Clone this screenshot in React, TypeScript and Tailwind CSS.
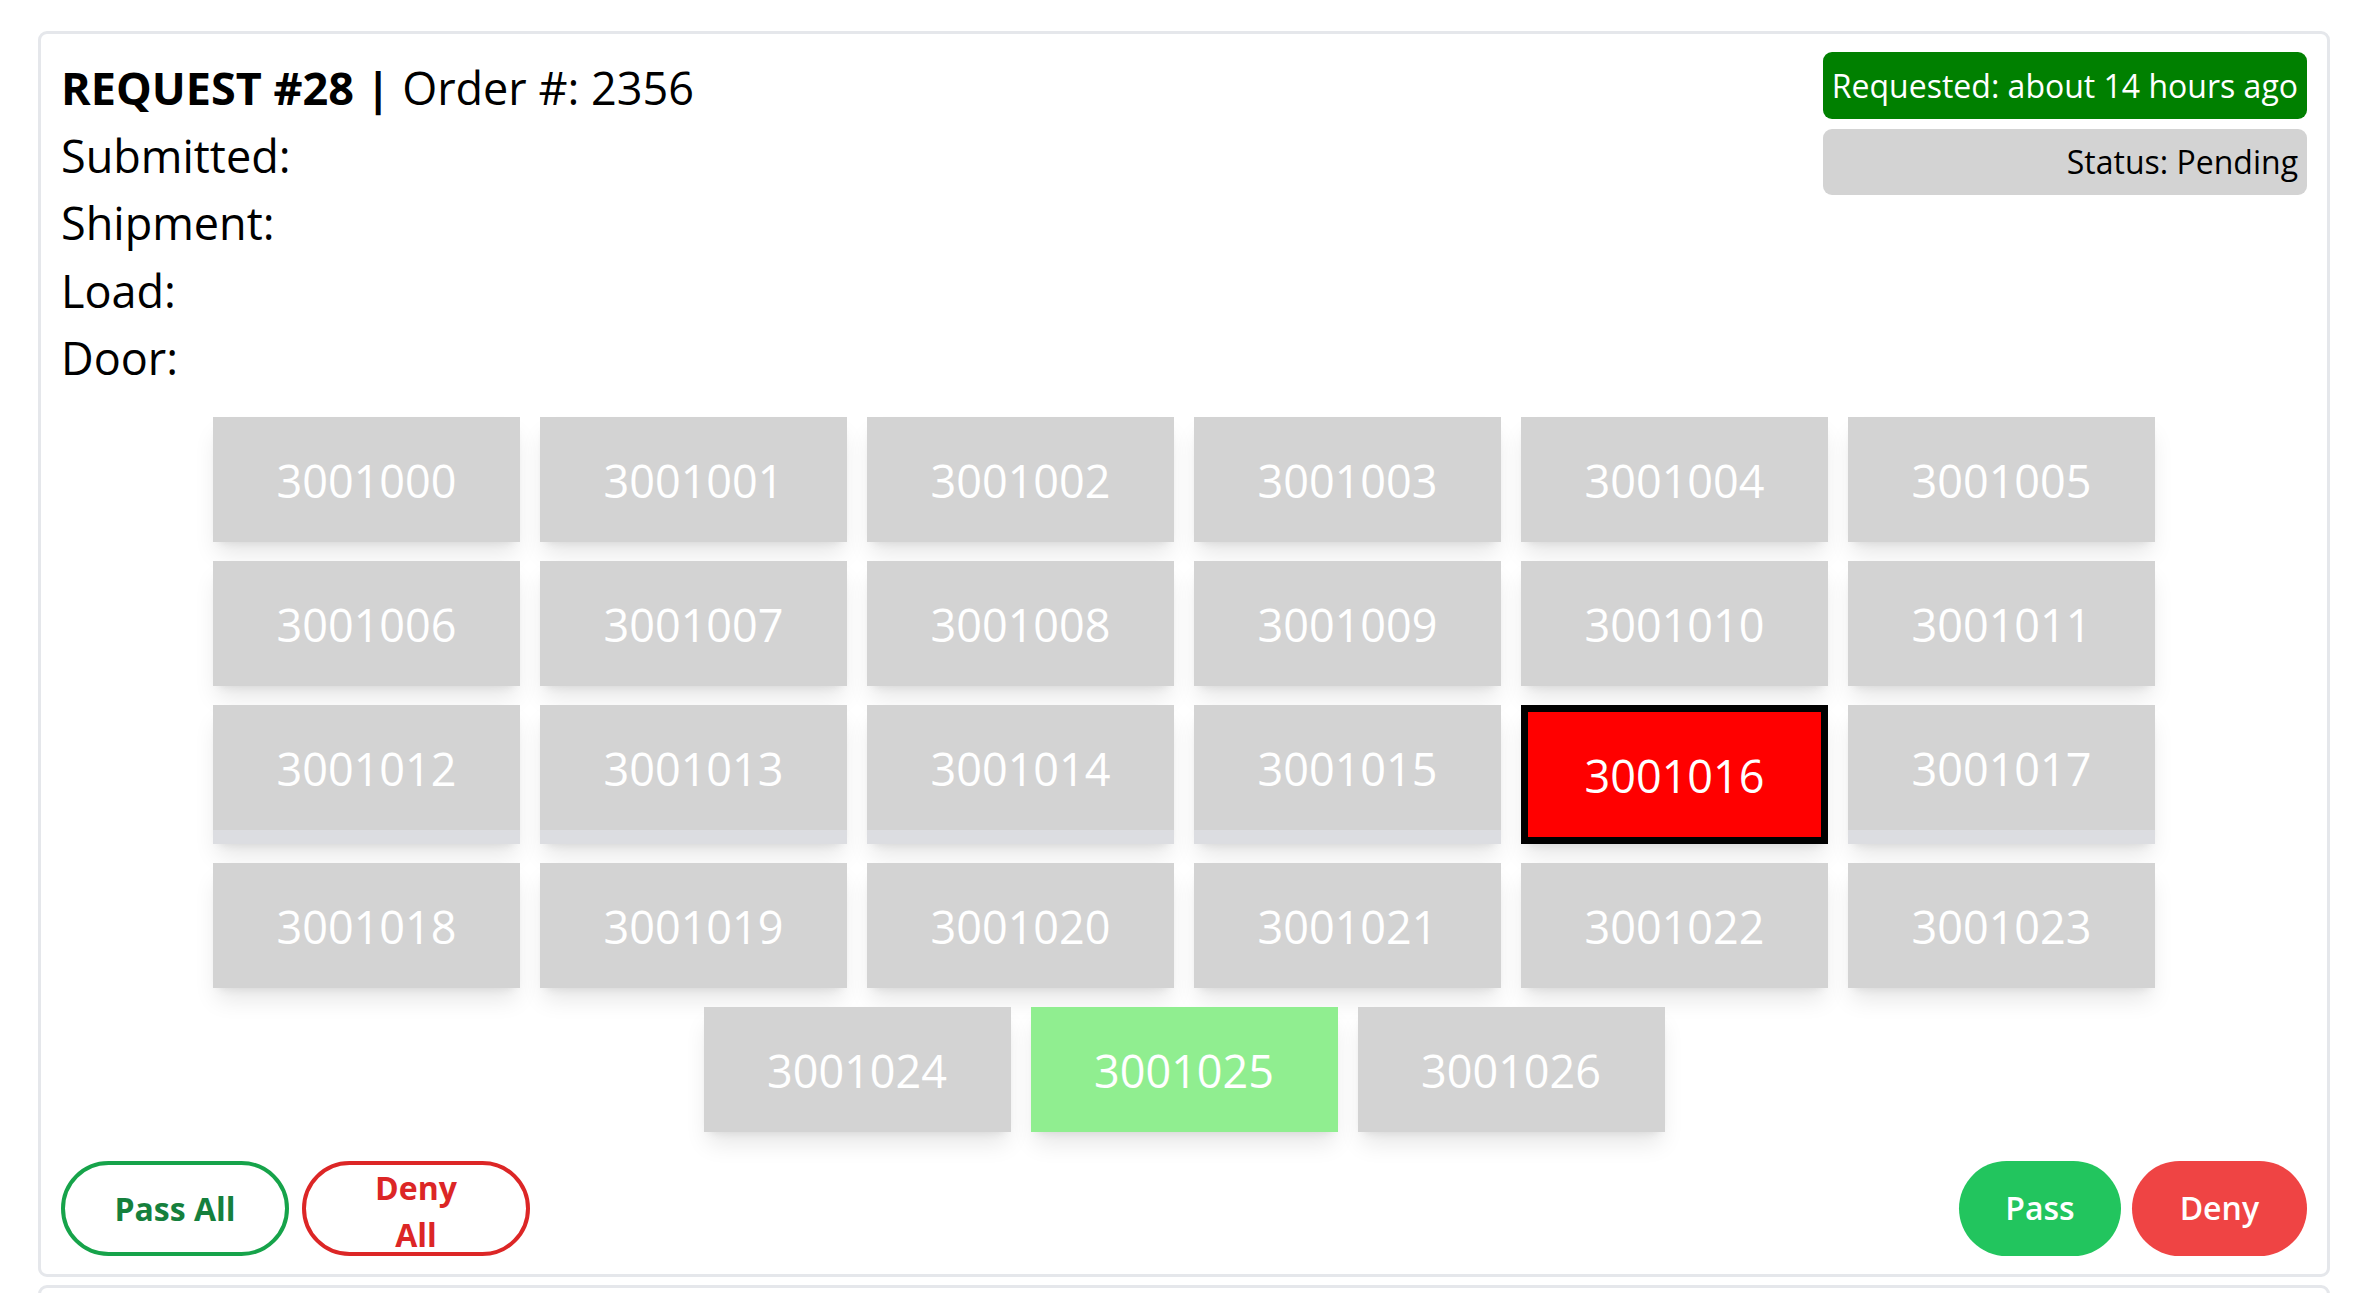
import React from 'react';

const FONT = { fontFamily: '"Open Sans", "Noto Sans", sans-serif' };

const tiles = Array.from({ length: 27 }, (_, i) => 3001000 + i);
const DENIED = 3001016;
const PASSED = 3001025;

function Tile({ code }: { code: number }) {
  if (code === DENIED) {
    return (
      <div className="w-[307px] border-[7px] border-black bg-[#ff0000] shadow-[0_15px_22px_-4px_rgba(0,0,0,0.1),0_6px_9px_-6px_rgba(0,0,0,0.1)]">
        <div className="flex h-[125px] items-center justify-center pt-[3px] text-[45px] text-white">{code}</div>
      </div>
    );
  }
  const bg = code === PASSED ? 'bg-[#90ee90]' : 'bg-[#d3d3d3]';
  return (
    <div className="w-[307px] bg-[#dcdde1] shadow-[0_15px_22px_-4px_rgba(0,0,0,0.1),0_6px_9px_-6px_rgba(0,0,0,0.1)]">
      <div className={`flex h-[125px] items-center justify-center pt-[4px] text-[45px] text-white ${bg}`}>{code}</div>
    </div>
  );
}

export default function App() {
  return (
    <div className="min-h-screen bg-white pt-[31px] leading-[1.5] text-black" style={FONT}>
      <div className="ml-[38px] w-[2292px] rounded-[9px] border-[3px] border-[#e5e7eb] px-[20px] pt-[18px] pb-[18px]">
        <div className="flex items-start justify-between">
          <div className="mt-[2px] text-[45px] leading-[67.5px]">
            <div>
              <span className="font-bold">REQUEST #28 |</span> Order #: 2356
            </div>
            <div>Submitted:</div>
            <div>Shipment:</div>
            <div>Load:</div>
            <div>Door:</div>
          </div>
          <div className="flex flex-col gap-[10px] text-[32px] leading-[48px]">
            <div className="rounded-[9px] bg-[#008000] px-[9px] py-[9.5px] text-right text-white">
              Requested: about 14 hours ago
            </div>
            <div className="rounded-[9px] bg-[#d3d3d3] px-[9px] py-[9px] text-right text-black">
              Status: Pending
            </div>
          </div>
        </div>

        <div className="mx-auto mt-[25px] flex w-[1942px] flex-wrap justify-center gap-x-[20px] gap-y-[19px]">
          {tiles.map((code) => (
            <Tile key={code} code={code} />
          ))}
        </div>

        <div className="mt-[29px] flex items-center justify-between">
          <div className="flex gap-[13px]">
            <button className="flex h-[95px] w-[228px] items-center justify-center rounded-full border-[4.5px] border-[#16a34a] text-[32px] font-bold leading-[47px] text-[#15803d]">
              Pass All
            </button>
            <button className="flex h-[95px] w-[228px] items-center justify-center rounded-full border-[4.5px] border-[#dc2626] pt-[6px] text-[32px] font-bold leading-[47px] text-[#dc2626]">
              <span className="w-[100px] text-center">Deny All</span>
            </button>
          </div>
          <div className="flex gap-[11px]">
            <button className="h-[95px] rounded-full bg-[#22c55e] px-[46px] text-[32px] font-semibold text-white">
              Pass
            </button>
            <button className="h-[95px] rounded-full bg-[#ef4444] px-[48px] text-[32px] font-semibold text-white">
              Deny
            </button>
          </div>
        </div>
      </div>

      <div className="mt-[8px] ml-[38px] h-[120px] w-[2292px] rounded-[9px] border-[3px] border-[#e5e7eb]" />
    </div>
  );
}
